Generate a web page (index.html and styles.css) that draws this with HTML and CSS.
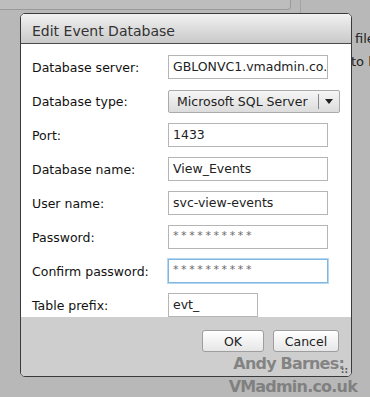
FILE: index.html
```html
<!DOCTYPE html>
<html>
<head>
<meta charset="utf-8">
<link rel="stylesheet" href="styles.css">
</head>
<body>
<div class="page">
  <div class="bg-top">
    <div class="bg-panel"></div>
    <div class="bg-divider"></div>
  </div>
  <div class="bg-right">
    <div class="bg-line l1">file</div>
    <div class="bg-line l2">to l</div>
  </div>

  <div class="dialog">
    <div class="dlg-title">Edit Event Database</div>
    <div class="dlg-body">
      <div class="row"><label>Database server:</label><div class="input"><span class="clip">GBLONVC1.vmadmin.co.uk</span></div></div>
      <div class="row"><label>Database type:</label>
        <div class="select"><span class="sel-text">Microsoft SQL Server</span><span class="sel-sep"></span><span class="sel-arrow"></span></div>
      </div>
      <div class="row"><label>Port:</label><div class="input">1433</div></div>
      <div class="row"><label>Database name:</label><div class="input">View_Events</div></div>
      <div class="row"><label>User name:</label><div class="input">svc-view-events</div></div>
      <div class="row"><label>Password:</label><div class="input pw">**********</div></div>
      <div class="row"><label>Confirm password:</label><div class="input pw focus">**********</div></div>
      <div class="row"><label>Table prefix:</label><div class="input short">evt_</div></div>
    </div>
    <div class="dlg-footer">
      <button class="btn ok">OK</button>
      <button class="btn cancel">Cancel</button>
      <span class="grip">::</span>
    </div>
  </div>

  <div class="watermark">
    <div class="wm1">Andy Barnes:</div>
    <div class="wm2">VMadmin.co.uk</div>
  </div>
</div>
</body>
</html>
```

FILE: styles.css
```css
html, body {
  margin: 0;
  padding: 0;
}
body {
  font-family: "DejaVu Sans", Verdana, sans-serif;
  background: #b8b8b8;
  width: 370px;
  height: 397px;
  overflow: hidden;
}
.page {
  position: relative;
  width: 370px;
  height: 397px;
  background: #b8b8b8;
}
.bg-top {
  display: flex;
  height: 14px;
}
.bg-panel {
  width: 290px;
  height: 9px;
  background: #bdbdbd;
  border-right: 1px solid #9a9a9a;
  border-bottom: 1px solid #9a9a9a;
  border-bottom-right-radius: 4px;
}
.bg-divider {
  margin-left: 9px;
  width: 1px;
  height: 14px;
  background: #a3a3a3;
}
.bg-right {
  position: absolute;
  left: 351px;
  top: 31px;
  font-size: 13px;
  color: #222;
}
.bg-line.l1 { margin-left: 4px; }
.bg-line.l2 { margin-top: 8px; }

.dialog {
  position: absolute;
  left: 20px;
  top: 13px;
  width: 330px;
  height: 362px;
  border: 1px solid #3a3a3a;
  border-radius: 5px;
  overflow: hidden;
  background: #fff;
  display: flex;
  flex-direction: column;
}
.dlg-title {
  height: 31px;
  box-sizing: border-box;
  padding: 9px 0 0 11px;
  font-size: 14px;
  color: #333;
  background: linear-gradient(#f1f1f1, #c9c9c9);
  border-bottom: 1px solid #4a4a4a;
}
.dlg-body {
  flex: 1;
  padding: 11px 0 0 11px;
  display: flex;
  flex-direction: column;
  gap: 10px;
}
.row {
  display: flex;
  align-items: center;
  height: 24px;
}
.row label {
  width: 136px;
  font-size: 12.5px;
  color: #111;
}
.input {
  box-sizing: border-box;
  width: 160px;
  height: 24px;
  border: 1px solid #b5b5b5;
  padding: 0 4px;
  font-size: 12.5px;
  line-height: 22px;
  color: #222;
  background: #fff;
  overflow: hidden;
  white-space: nowrap;
}
.input.short { width: 90px; }
.input.pw {
  font-size: 11px;
  color: #6a6a6a;
  letter-spacing: 2.6px;
  line-height: 20px;
}
.input.focus {
  border: 1px solid #7fb7e0;
  box-shadow: 0 0 0 1px #b6d7f0;
}
.select {
  box-sizing: border-box;
  width: 172px;
  height: 23px;
  border: 1px solid #aaa;
  border-radius: 2px;
  background: linear-gradient(#f6f6f6, #dcdcdc);
  display: flex;
  align-items: center;
  font-size: 12.5px;
  color: #222;
}
.sel-text {
  padding-left: 8px;
  width: 141px;
}
.sel-sep {
  width: 1px;
  height: 15px;
  background: #888;
}
.sel-arrow {
  margin-left: 6px;
  width: 0;
  height: 0;
  border-left: 4px solid transparent;
  border-right: 4px solid transparent;
  border-top: 5px solid #222;
}
.dlg-footer {
  height: 48px;
  background: #cecece;
  display: flex;
  justify-content: flex-end;
  align-items: flex-start;
  padding: 13px 12px 0 0;
  gap: 9px;
  position: relative;
}
.btn {
  height: 22px;
  border: 1px solid #9e9e9e;
  border-radius: 3px;
  background: linear-gradient(#ffffff, #e6e6e6);
  font-family: "DejaVu Sans", Verdana, sans-serif;
  font-size: 12.5px;
  color: #222;
  padding: 0;
}
.btn.ok { width: 62px; }
.btn.cancel { width: 66px; }
.grip {
  position: absolute;
  right: 3px;
  bottom: 1px;
  font-size: 9px;
  color: #555;
  font-weight: bold;
}
.watermark {
  position: absolute;
  left: 217px;
  top: 352px;
  font-family: "DejaVu Sans", Verdana, sans-serif;
  font-weight: bold;
  color: rgba(118,118,118,0.85);
  font-size: 16px;
  letter-spacing: -0.8px;
  line-height: 23px;
  text-align: right;
  width: 140px;
}
.wm1 { padding-right: 13px; }
```
